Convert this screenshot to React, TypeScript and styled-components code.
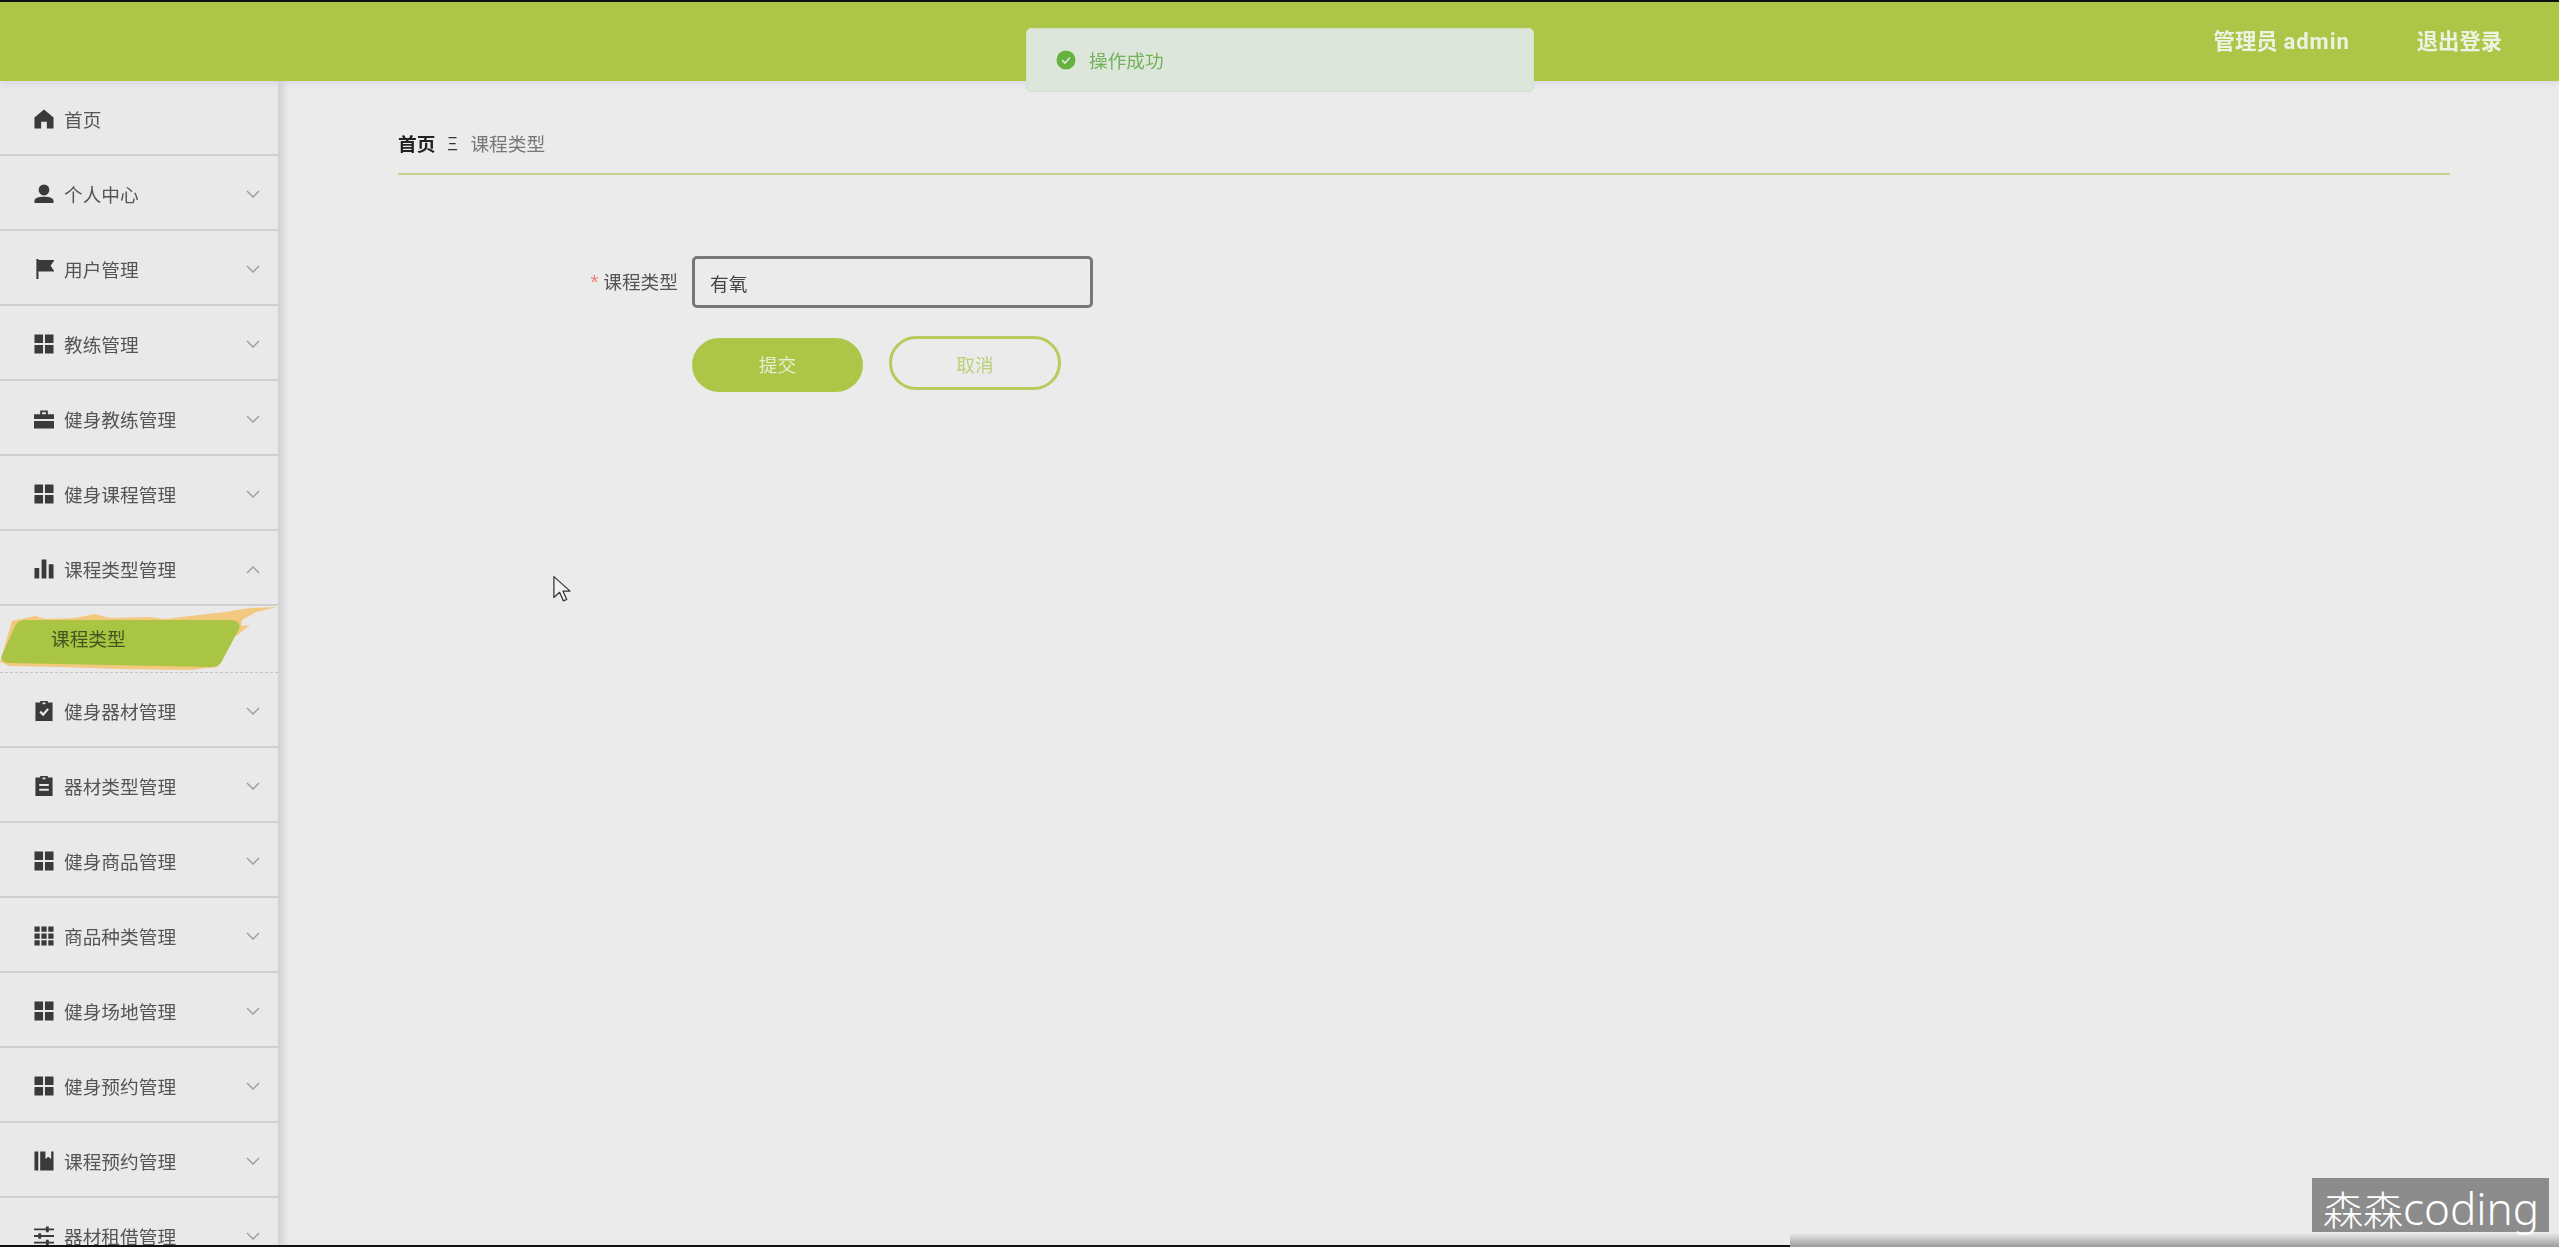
import React from 'react';
import styled, { createGlobalStyle } from 'styled-components';

const Global = createGlobalStyle`
  html, body { margin: 0; padding: 0; height: 100%; overflow: hidden; background: #ebebeb; }
  body { font-family: "Liberation Sans", "Noto Sans CJK SC", sans-serif; }
  #root { height: 100%; }
`;

const Page = styled.div`
  position: relative;
  width: 2559px;
  height: 1247px;
  overflow: hidden;
  display: flex;
  flex-direction: column;
`;
const Soft = styled.div`
  display: flex;
  flex-direction: column;
  height: 100%;
  filter: blur(0.6px);
`;
const Header = styled.header`
  position: relative;
  z-index: 2;
  flex: 0 0 81px;
  box-sizing: border-box;
  border-top: 2px solid #111;
  background: #aec648;
  box-shadow: 0 2px 7px rgba(110, 125, 180, 0.16);
  display: flex;
  justify-content: flex-end;
  align-items: center;
  gap: 67px;
  padding: 0 57px 5px 0;
`;
const HeaderText = styled.span`
  color: #edf2e2;
  font-size: 21.3px;
  font-weight: 700;
  white-space: nowrap;
`;
const HeaderLatin = styled.span`
  font-family: Roboto, sans-serif;
  font-size: 22px;
  letter-spacing: 1px;
`;
const Body = styled.div`
  flex: 1;
  display: flex;
  min-height: 0;
`;
const Sidebar = styled.nav`
  flex: 0 0 278px;
  background: #e9e9e9;
  box-shadow: 4px 0 8px rgba(0, 0, 0, 0.14);
  overflow: hidden;
  z-index: 1;
`;
const MenuRow = styled.div`
  box-sizing: border-box;
  height: 75px;
  border-bottom: 2px solid #cfcfcf;
  display: flex;
  align-items: center;
  padding: 2px 18px 0 34px;
  color: #555;
`;
const IconSvg = styled.svg`
  flex: 0 0 20px;
  width: 20px;
  height: 20px;
  fill: #3a3a3a;
  margin-right: 10px;
`;
const MenuLabel = styled.span`
  flex: 1;
  font-size: 18.7px;
  white-space: nowrap;
`;
const Chevron = styled.svg`
  width: 14px;
  height: 9px;
  margin-top: 2px;
  fill: none;
  stroke: #9a9a9a;
  stroke-width: 1.3;
`;
const SubRow = styled.div`
  position: relative;
  box-sizing: border-box;
  height: 67px;
  border-bottom: 1px dashed #c4c4c4;
  display: flex;
  align-items: center;
  padding: 0 0 4px 51px;
`;
const Brush = styled.svg`
  position: absolute;
  left: 0;
  top: 0;
  width: 278px;
  height: 66px;
`;
const SubLabel = styled.span`
  position: relative;
  font-size: 18.7px;
  color: #46541f;
`;
const Main = styled.main`
  flex: 1;
  min-width: 0;
  padding: 0 109px 0 120px;
`;
const Crumbs = styled.div`
  box-sizing: border-box;
  height: 94px;
  padding-top: 53px;
  border-bottom: 2px solid #c3d38a;
  display: flex;
  align-items: flex-start;
  line-height: 22px;
  font-size: 18.7px;
`;
const CrumbHome = styled.span`
  color: #222;
  font-weight: 700;
`;
const CrumbSep = styled.span`
  color: #333;
  width: 35px;
  text-align: center;
  font-size: 17px;
  transform: scaleX(0.62);
`;
const CrumbCurrent = styled.span`
  color: #777;
`;
const FormRow = styled.div`
  display: flex;
  align-items: center;
  margin-top: 81px;
`;
const FieldLabel = styled.label`
  box-sizing: border-box;
  width: 294px;
  padding: 0 14px 4px 0;
  text-align: right;
  font-size: 18.7px;
  color: #555;
`;
const Star = styled.span`
  color: #f07a72;
  margin-right: 5px;
  font-size: 20px;
`;
const TextInput = styled.input`
  box-sizing: border-box;
  width: 401px;
  height: 52px;
  border: 3px solid #777;
  border-radius: 5px;
  background: #ebebeb;
  padding: 1px 15px 0;
  font: 18.7px "Liberation Sans", "Noto Sans CJK SC", sans-serif;
  color: #444;
  outline: none;
`;
const Actions = styled.div`
  display: flex;
  align-items: flex-start;
  gap: 26px;
  margin: 28px 0 0 294px;
`;
const SubmitButton = styled.button`
  width: 171px;
  height: 54px;
  margin-top: 2px;
  padding: 0 0 3px;
  border: 0;
  border-radius: 27px;
  background: #aec648;
  color: #e6eed2;
  font: 18.7px "Liberation Sans", "Noto Sans CJK SC", sans-serif;
`;
const CancelButton = styled.button`
  box-sizing: border-box;
  width: 172px;
  height: 54px;
  border: 3px solid #b5cb5c;
  border-radius: 27px;
  background: transparent;
  color: #bcd077;
  font: 18.7px "Liberation Sans", "Noto Sans CJK SC", sans-serif;
`;
const Toast = styled.div`
  position: absolute;
  left: 1026px;
  top: 28px;
  box-sizing: border-box;
  width: 508px;
  height: 64px;
  border-radius: 5px;
  border: 1px solid #d5e0cb;
  background: #dde6da;
  display: flex;
  align-items: center;
  gap: 13px;
  padding-left: 29px;
  z-index: 3;
`;
const ToastIcon = styled.svg`
  width: 20px;
  height: 20px;
`;
const ToastText = styled.span`
  font-size: 18.7px;
  color: #74b25a;
  margin-top: -2px;
`;
const Cursor = styled.svg`
  position: absolute;
  left: 552px;
  top: 574px;
  width: 19px;
  height: 30px;
  z-index: 2;
`;
const BottomLine = styled.div`
  position: absolute;
  left: 0;
  bottom: 0;
  width: 1790px;
  height: 2px;
  background: #111;
  z-index: 3;
`;
const BottomShade = styled.div`
  position: absolute;
  left: 1790px;
  right: 0;
  bottom: 0;
  height: 14px;
  background: linear-gradient(to bottom, rgba(150, 150, 150, 0), #9a9a9a);
  z-index: 3;
`;
const Watermark = styled.div`
  position: absolute;
  left: 2312px;
  top: 1178px;
  box-sizing: border-box;
  width: 237px;
  height: 54px;
  padding-left: 11px;
  background: #8c8c8c;
  color: #fff;
  font: 300 40px/60px "Noto Sans CJK SC", sans-serif;
  white-space: nowrap;
  z-index: 4;
`;
const WatermarkLatin = styled.span`
  font-family: "Noto Sans", sans-serif;
  font-size: 44px;
`;

const paths: Record<string, React.ReactNode> = {
  home: <path d="M12 2 2 10.5V22h7v-7h6v7h7V10.5z" />,
  user: <path d="M12 2a5.6 5.6 0 0 1 5.6 5.8A5.6 5.6 0 0 1 12 13.5a5.6 5.6 0 0 1-5.6-5.7A5.6 5.6 0 0 1 12 2zM2 21.5v-2.2c0-2.8 3.8-4.3 10-4.3s10 1.500 10 4.300v2.200z" />,
  flag: <path d="M4 1h2.200v1.500H23l-4 6 4 6H6.200V24H4z" />,
  grid: <path d="M2 2h9v9H2zM13 2h9v9h-9zM2 13h9v9H2zM13 13h9v9h-9z" />,
  case: <path d="M8 3h8v4h7v5H1V7h7zm2 2v2h4V5zM1 14h22v8H1z" />,
  bars: <path d="M2 11h5v11H2zM9.500 2h5v20h-5zM17 7h5v15h-5z" />,
  claim: <path d="M8 1h8v2h5v21H3V3h5zM10.500 3v2h3V3zM7.200 13.500l4 4 6-7-1.800-1.500-4.300 5-2.300-2.200z" />,
  order: <path d="M8 1h8v2h5v21H3V3h5zM10.500 3v2h3V3zM7 10v2h10v-2zM7 15v2h10v-2z" />,
  dense: <path d="M2 2h5.500v5.500H2zM9.300 2h5.500v5.500H9.300zM16.500 2H22v5.500h-5.500zM2 9.300h5.500v5.500H2zM9.300 9.300h5.500v5.500H9.300zM16.500 9.300H22v5.500h-5.500zM2 16.500h5.500V22H2zM9.300 16.500h5.500V22H9.300zM16.500 16.500H22V22h-5.500z" />,
  book: <path d="M2 2h4v20H2zM8 2h5.500v8l3-2.500 3 2.500V2H22v20H8z" />,
  sliders: <path d="M1 4h13V2h3v2h6v2h-6v2h-3V6H1zM1 11h5V9h3v2h14v2H9v2H6v-2H1zM1 18h13v-2h3v2h6v2h-6v2h-3v-2H1z" />,
};

const MenuIcon = ({ name }: { name: string }) => <IconSvg viewBox="1.5 1.5 21 21">{paths[name]}</IconSvg>;

const menuTop = [
  { icon: 'user', label: '个人中心' },
  { icon: 'flag', label: '用户管理' },
  { icon: 'grid', label: '教练管理' },
  { icon: 'case', label: '健身教练管理' },
  { icon: 'grid', label: '健身课程管理' },
];
const menuBottom = [
  { icon: 'claim', label: '健身器材管理' },
  { icon: 'order', label: '器材类型管理' },
  { icon: 'grid', label: '健身商品管理' },
  { icon: 'dense', label: '商品种类管理' },
  { icon: 'grid', label: '健身场地管理' },
  { icon: 'grid', label: '健身预约管理' },
  { icon: 'book', label: '课程预约管理' },
  { icon: 'sliders', label: '器材租借管理' },
];

const Arrow = ({ up }: { up?: boolean }) => (
  <Chevron viewBox="0 0 14 9">
    <path d={up ? 'M1 8l6-6 6 6' : 'M1 1l6 6 6-6'} />
  </Chevron>
);

const Item = ({ icon, label, up }: { icon: string; label: string; up?: boolean }) => (
  <MenuRow>
    <MenuIcon name={icon} />
    <MenuLabel>{label}</MenuLabel>
    <Arrow up={up} />
  </MenuRow>
);

export default function App() {
  return (
    <Page>
      <Global />
      <Soft>
        <Header>
          <HeaderText>
            管理员 <HeaderLatin>admin</HeaderLatin>
          </HeaderText>
          <HeaderText>退出登录</HeaderText>
        </Header>
        <Body>
          <Sidebar>
            <MenuRow>
              <MenuIcon name="home" />
              <MenuLabel>首页</MenuLabel>
            </MenuRow>
            {menuTop.map((m, i) => (
              <Item key={i} icon={m.icon} label={m.label} />
            ))}
            <Item icon="bars" label="课程类型管理" up />
            <SubRow>
              <Brush viewBox="0 0 278 66">
                <path
                  fill="#f2c97f"
                  d="M12 15 L35 10 L46 13 L75 12 L95 8 L110 12 L150 11 L165 13 L190 10 L225 6 L250 2 L277 1 L256 6 L242 14 L241 20 L250 19 L236 30 L232 29 L218 61 L190 64 L120 63 L60 61 L10 60 L0 56 Z"
                />
                <path
                  fill="#a9c543"
                  d="M24 14 L230 14 C238 14 241 18 239 23 L222 55 C220 59 216 61 210 61 L10 57 C3 57 0 53 2 49 L15 20 C17 16 20 14 24 14 Z"
                />
              </Brush>
              <SubLabel>课程类型</SubLabel>
            </SubRow>
            {menuBottom.map((m, i) => (
              <Item key={i} icon={m.icon} label={m.label} />
            ))}
          </Sidebar>
          <Main>
            <Crumbs>
              <CrumbHome>首页</CrumbHome>
              <CrumbSep>三</CrumbSep>
              <CrumbCurrent>课程类型</CrumbCurrent>
            </Crumbs>
            <FormRow>
              <FieldLabel>
                <Star>*</Star>课程类型
              </FieldLabel>
              <TextInput value="有氧" readOnly />
            </FormRow>
            <Actions>
              <SubmitButton>提交</SubmitButton>
              <CancelButton>取消</CancelButton>
            </Actions>
          </Main>
        </Body>
        <Toast>
          <ToastIcon viewBox="0 0 20 20">
            <circle cx="10" cy="10" r="9.500" fill="#67b13f" />
            <path d="M6 10.200l3 2.800 5-5.500" fill="none" stroke="#dde6da" strokeWidth="1.600" />
          </ToastIcon>
          <ToastText>操作成功</ToastText>
        </Toast>
        <Cursor viewBox="0 0 20 30">
          <path d="M2 2v22l6-5.500 4 9 3.500-1.500-4-8.800H19z" fill="#f2f2f2" stroke="#333" strokeWidth="1.300" strokeLinejoin="round" />
        </Cursor>
      </Soft>
      <BottomLine />
      <BottomShade />
      <Watermark>
        森森<WatermarkLatin>coding</WatermarkLatin>
      </Watermark>
    </Page>
  );
}
